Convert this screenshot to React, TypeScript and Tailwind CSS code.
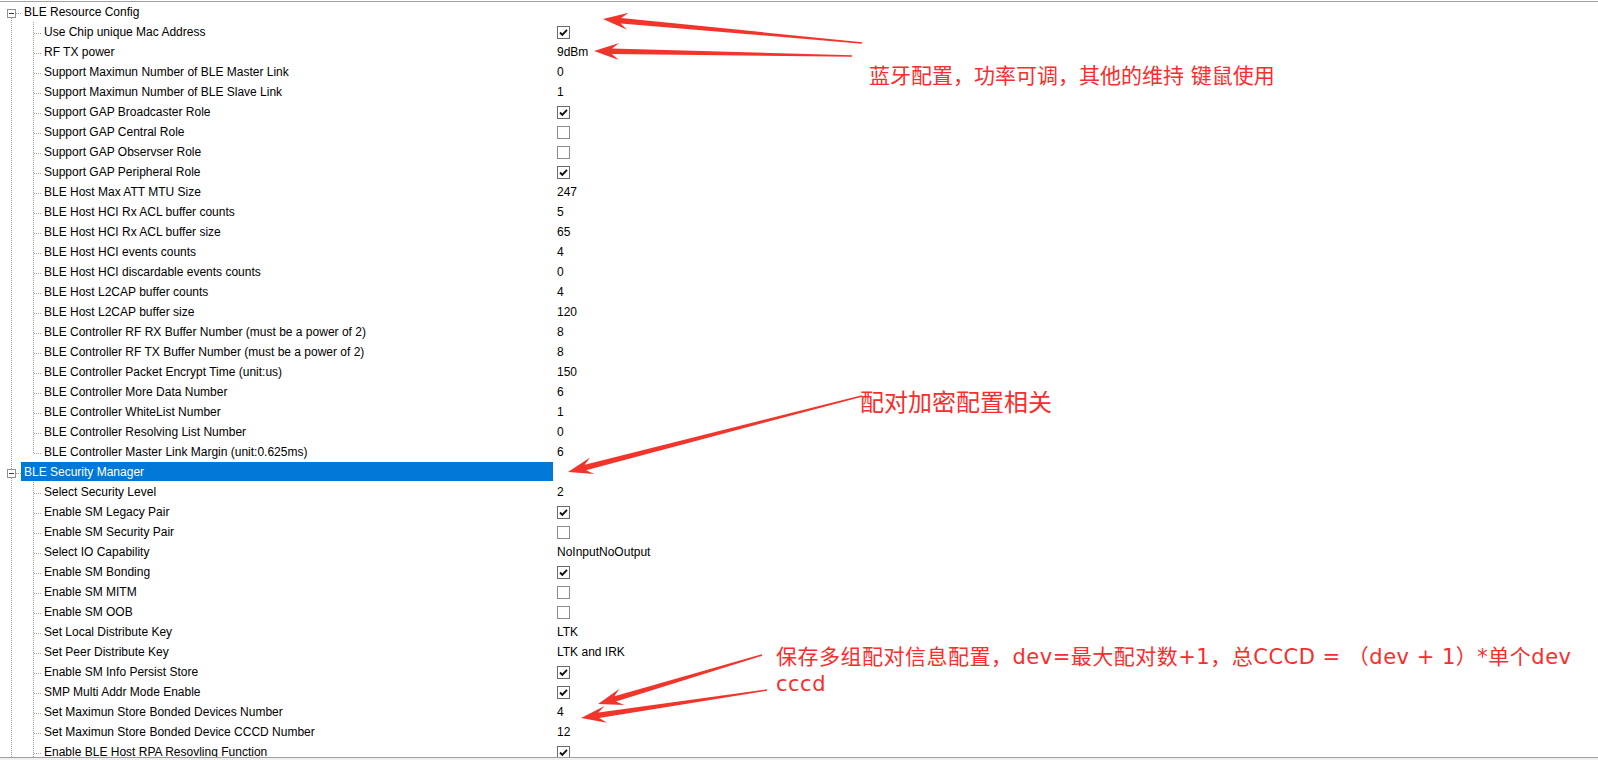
import React from 'react';

type Row = {
  label: string;
  root?: boolean;
  value?: string;
  check?: boolean;
  selected?: boolean;
  last?: boolean;
};

const ROWS: Row[] = [
  { label: 'BLE Resource Config', root: true },
  { label: 'Use Chip unique Mac Address', check: true },
  { label: 'RF TX power', value: '9dBm' },
  { label: 'Support Maximun Number of BLE Master Link', value: '0' },
  { label: 'Support Maximun Number of BLE Slave Link', value: '1' },
  { label: 'Support GAP Broadcaster Role', check: true },
  { label: 'Support GAP Central Role', check: false },
  { label: 'Support GAP Observser Role', check: false },
  { label: 'Support GAP Peripheral Role', check: true },
  { label: 'BLE Host Max ATT MTU Size', value: '247' },
  { label: 'BLE Host HCI Rx ACL buffer counts', value: '5' },
  { label: 'BLE Host HCI Rx ACL buffer size', value: '65' },
  { label: 'BLE Host HCI events counts', value: '4' },
  { label: 'BLE Host HCI discardable events counts', value: '0' },
  { label: 'BLE Host L2CAP buffer counts', value: '4' },
  { label: 'BLE Host L2CAP buffer size', value: '120' },
  { label: 'BLE Controller RF RX Buffer Number (must be a power of 2)', value: '8' },
  { label: 'BLE Controller RF TX Buffer Number (must be a power of 2)', value: '8' },
  { label: 'BLE Controller Packet Encrypt Time (unit:us)', value: '150' },
  { label: 'BLE Controller More Data Number', value: '6' },
  { label: 'BLE Controller WhiteList Number', value: '1' },
  { label: 'BLE Controller Resolving List Number', value: '0' },
  { label: 'BLE Controller Master Link Margin (unit:0.625ms)', value: '6', last: true },
  { label: 'BLE Security Manager', root: true, selected: true },
  { label: 'Select Security Level', value: '2' },
  { label: 'Enable SM Legacy Pair', check: true },
  { label: 'Enable SM Security Pair', check: false },
  { label: 'Select IO Capability', value: 'NoInputNoOutput' },
  { label: 'Enable SM Bonding', check: true },
  { label: 'Enable SM MITM', check: false },
  { label: 'Enable SM OOB', check: false },
  { label: 'Set Local Distribute Key', value: 'LTK' },
  { label: 'Set Peer Distribute Key', value: 'LTK and IRK' },
  { label: 'Enable SM Info Persist Store', check: true },
  { label: 'SMP Multi Addr Mode Enable', check: true },
  { label: 'Set Maximun Store Bonded Devices Number', value: '4' },
  { label: 'Set Maximun Store Bonded Device CCCD Number', value: '12' },
  { label: 'Enable BLE Host RPA Resovling Function', check: true },
];

const DOT = { stroke: '#a0a0a0', strokeDasharray: '1 1', strokeWidth: 1 };

function RootGuides({ first }: { first: boolean }) {
  return (
    <svg width="21" height="20" className="shrink-0">
      {!first && <line x1="11.5" y1="0" x2="11.5" y2="7" {...DOT} />}
      <line x1="11.5" y1="16" x2="11.5" y2="20" {...DOT} />
      <line x1="16" y1="11.5" x2="21" y2="11.5" {...DOT} />
      <rect x="7.5" y="7.5" width="8" height="8" fill="#fff" stroke="#919191" />
      <line x1="9" y1="11.5" x2="14" y2="11.5" stroke="#3b3b3b" />
    </svg>
  );
}

function ChildGuides({ last }: { last?: boolean }) {
  return (
    <svg width="41" height="20" className="shrink-0">
      <line x1="11.5" y1="0" x2="11.5" y2="20" {...DOT} />
      <line x1="33.5" y1="0" x2="33.5" y2={last ? 12 : 20} {...DOT} />
      <line x1="34" y1="11.5" x2="41" y2="11.5" {...DOT} />
    </svg>
  );
}

function CheckBox({ on }: { on: boolean }) {
  return (
    <span
      className={
        on
          ? 'flex h-[13px] w-[13px] items-center justify-center border border-[#6a6a6a] bg-white'
          : 'flex h-[13px] w-[13px] items-center justify-center border border-[#8c8c8c] bg-white'
      }
    >
      {on && (
        <svg width="11" height="11" viewBox="0 0 11 11">
          <polyline points="2,5.5 4.3,7.8 9,2.8" fill="none" stroke="#111" strokeWidth="1.9" />
        </svg>
      )}
    </span>
  );
}

function TreeRow({ row, index }: { row: Row; index: number }) {
  return (
    <div className="flex h-[20px] shrink-0 items-center">
      {row.root ? <RootGuides first={index === 0} /> : <ChildGuides last={row.last} />}
      <div
        className={
          row.root
            ? row.selected
              ? 'flex h-[19px] w-[532px] shrink-0 items-center self-start bg-[#0078d7] pl-[3px] text-white'
              : 'flex h-full w-[532px] shrink-0 items-center pl-[3px]'
            : 'flex h-full w-[512px] shrink-0 items-center pl-[3px]'
        }
      >
        {row.label}
      </div>
      <div className="flex h-full items-center pl-[4px]">
        {row.check !== undefined ? <CheckBox on={row.check} /> : row.value}
      </div>
    </div>
  );
}

type Pt = [number, number];

function arrowPoints(tail: Pt, tip: Pt) {
  const dx = tip[0] - tail[0];
  const dy = tip[1] - tail[1];
  const len = Math.hypot(dx, dy);
  const d: Pt = [dx / len, dy / len];
  const n: Pt = [-d[1], d[0]];
  const headLen = 25;
  const headHalf = 8.5;
  const neckHalf = 2.8;
  const tailHalf = 0.7;
  const notch = 7;
  const base: Pt = [tip[0] - d[0] * headLen, tip[1] - d[1] * headLen];
  const neck: Pt = [base[0] + d[0] * notch, base[1] + d[1] * notch];
  const p = (o: Pt, s: number): string => `${(o[0] + n[0] * s).toFixed(1)},${(o[1] + n[1] * s).toFixed(1)}`;
  return [
    p(tail, tailHalf),
    p(neck, neckHalf),
    p(base, headHalf),
    `${tip[0]},${tip[1]}`,
    p(base, -headHalf),
    p(neck, -neckHalf),
    p(tail, -tailHalf),
  ].join(' ');
}

const ARROWS: [Pt, Pt][] = [
  [[862, 43], [603, 19]],
  [[852, 56], [594, 51]],
  [[862, 396], [568, 472]],
  [[762, 655], [598, 704]],
  [[767, 690], [581, 718]],
];

const NOTE = { fontFamily: '"DejaVu Sans", "Noto Sans CJK SC", sans-serif' };

export default function App() {
  return (
    <div
      className="relative flex h-[760px] w-full flex-col overflow-hidden bg-white text-[12px] text-black"
      style={{ fontFamily: '"Liberation Sans", Arial, sans-serif' }}
    >
      <div className="h-[2px] shrink-0 border-b border-[#a0a0a0]" />
      <div className="flex h-[755px] shrink-0 flex-col overflow-hidden">
        {ROWS.map((r, i) => (
          <TreeRow key={i} row={r} index={i} />
        ))}
      </div>
      <div className="flex-1 border-t border-[#a0a0a0] bg-[#f0f0f0]" />

      <svg className="pointer-events-none absolute left-0 top-0" width="1598" height="760">
        {ARROWS.map(([a, b], i) => (
          <polygon key={i} points={arrowPoints(a, b)} fill="#f2352b" />
        ))}
      </svg>

      <div
        className="pointer-events-none absolute left-[869px] top-[62px] whitespace-nowrap text-[21px] leading-[28px] text-[#fb2c2c]"
        style={NOTE}
      >
        蓝牙配置，功率可调，其他的维持 键鼠使用
      </div>
      <div
        className="pointer-events-none absolute left-[860px] top-[388px] whitespace-nowrap text-[24px] leading-[30px] text-[#fb2c2c]"
        style={NOTE}
      >
        配对加密配置相关
      </div>
      <div
        className="pointer-events-none absolute left-[776px] top-[644px] whitespace-nowrap text-[21px] leading-[27px] tracking-[0.5px] text-[#fb2c2c]"
        style={NOTE}
      >
        保存多组配对信息配置，dev=最大配对数+1，总CCCD = （dev + 1）*单个dev
        <br />
        cccd
      </div>
    </div>
  );
}
